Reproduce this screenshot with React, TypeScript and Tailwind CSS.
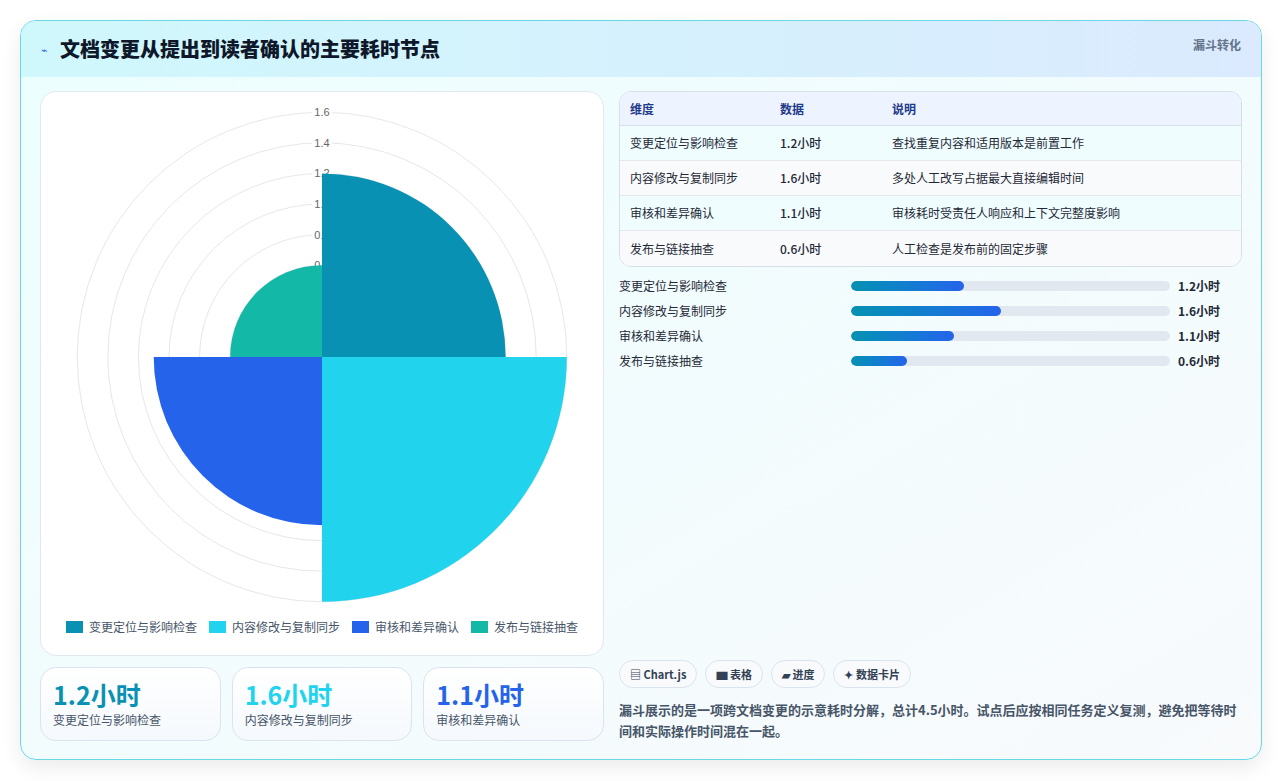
import React from 'react';

const rows = [
  { name: '变更定位与影响检查', v: 1.2, note: '查找重复内容和适用版本是前置工作', color: '#0891b2' },
  { name: '内容修改与复制同步', v: 1.6, note: '多处人工改写占据最大直接编辑时间', color: '#22d3ee' },
  { name: '审核和差异确认', v: 1.1, note: '审核耗时受责任人响应和上下文完整度影响', color: '#2563eb' },
  { name: '发布与链接抽查', v: 0.6, note: '人工检查是发布前的固定步骤', color: '#14b8a6' },
];

const font = { fontFamily: '"Noto Sans CJK SC", "Liberation Sans", sans-serif' };

function PolarChart() {
  const cx = 281;
  const cy = 258;
  const k = 153;
  const wedge = (r: number, a0: number, a1: number) => {
    const p = (a: number) => [cx + r * Math.cos(a), cy + r * Math.sin(a)];
    const [x0, y0] = p(a0);
    const [x1, y1] = p(a1);
    return `M${cx} ${cy} L${x0} ${y0} A${r} ${r} 0 0 1 ${x1} ${y1} Z`;
  };
  const ticks = [0, 0.2, 0.4, 0.6, 0.8, 1.0, 1.2, 1.4, 1.6];
  return (
    <svg width="562" height="522" className="block">
      {ticks.slice(1).map((t) => (
        <circle key={t} cx={cx} cy={cy} r={t * k} fill="none" stroke="#e5e7eb" strokeWidth="1" />
      ))}
      {ticks.map((t) => (
        <g key={'l' + t}>
          <rect x={cx - 10} y={cy - t * k - 7} width="20" height="13" fill="white" />
          <text x={cx} y={cy - t * k + 4} textAnchor="middle" fontSize="11" fill="#666" fontFamily="Liberation Sans, sans-serif">
            {t === 0 ? '0' : t.toFixed(1)}
          </text>
        </g>
      ))}
      {rows.map((r, i) => {
        const a0 = -Math.PI / 2 + (i * Math.PI) / 2;
        return <path key={r.name} d={wedge(r.v * k, a0, a0 + Math.PI / 2)} fill={r.color} />;
      })}
    </svg>
  );
}

export default function App() {
  return (
    <div className="min-h-screen bg-white p-5 text-[#0f172a]" style={font}>
      <div className="h-[740px] rounded-2xl border border-[#67d8e6] overflow-hidden bg-gradient-to-br from-[#ecfeff] to-[#f8fafc] shadow-[0_8px_20px_rgba(0,0,0,0.08)] flex flex-col">
        <div className="h-14 shrink-0 bg-gradient-to-r from-[#cff8fc] to-[#dbeafe] flex items-start justify-between px-5 pt-[14px]">
          <div className="flex items-center gap-3">
            <span className="text-[11px] text-[#2563eb]">⌁</span>
            <h1 className="text-[20px] font-black leading-7">文档变更从提出到读者确认的主要耗时节点</h1>
          </div>
          <span className="text-xs font-bold text-[#64748b] mt-[2px]">漏斗转化</span>
        </div>
        <div className="flex-1 flex gap-[15px] px-[19px] pt-[14px] pb-[18px]">
          <div className="w-[564px] flex flex-col gap-[11px]">
            <div className="h-[565px] rounded-2xl border border-[#e2e8f0] bg-white flex flex-col items-center pt-[7px]">
              <PolarChart />
              <div className="flex items-center gap-3 text-xs text-[#475569] -mt-[2px]">
                {rows.map((r) => (
                  <div key={r.name} className="flex items-center gap-1.5">
                    <span className="w-[17px] h-3" style={{ background: r.color }} />
                    {r.name}
                  </div>
                ))}
              </div>
            </div>
            <div className="flex gap-[11px]">
              {rows.slice(0, 3).map((r) => (
                <div key={r.name} className="flex-1 h-[74px] rounded-2xl border border-[#dbe4ee] bg-gradient-to-b from-white to-[#f5f9fd] px-3 pt-[10px]">
                  <div className="text-[25px] font-bold leading-8" style={{ color: r.color }}>{r.v}小时</div>
                  <div className="text-xs text-[#475569] mt-0.5">{r.name}</div>
                </div>
              ))}
            </div>
          </div>
          <div className="flex-1 flex flex-col">
            <div className="rounded-xl border border-[#d6dee8] overflow-hidden bg-white">
              <div className="grid grid-cols-[150px_112px_1fr] h-[34px] items-center px-2.5 bg-[#eef4ff] border-b border-[#d6dee8] text-xs font-bold text-[#1e3a8a]">
                <span>维度</span><span>数据</span><span>说明</span>
              </div>
              {rows.map((r, i) => (
                <div key={r.name} className={`grid grid-cols-[150px_112px_1fr] h-[35px] items-center px-2.5 text-xs text-[#1f2937] ${i % 2 === 0 ? 'bg-[#effdff]' : 'bg-[#f9fafb]'} ${i < 3 ? 'border-b border-[#e5e7eb]' : ''}`}>
                  <span>{r.name}</span><span className="font-medium">{r.v}小时</span><span>{r.note}</span>
                </div>
              ))}
            </div>
            <div className="flex flex-col gap-[7px] mt-[10px]">
              {rows.map((r) => (
                <div key={r.name} className="flex items-center h-[18px] text-xs">
                  <span className="w-[232px] text-[#1f2937]">{r.name}</span>
                  <div className="w-[319px] h-[10px] rounded-full bg-[#e2e8f0] overflow-hidden">
                    <div className="h-full rounded-full bg-gradient-to-r from-[#0891b2] to-[#2563eb]" style={{ width: `${(r.v / 3.4) * 100}%` }} />
                  </div>
                  <span className="ml-2 font-bold text-[#1f2937]">{r.v}小时</span>
                </div>
              ))}
            </div>
            <div className="flex-1" />
            <div className="flex gap-2 text-[11px] font-bold text-[#334155]">
              {['▤ Chart.js', '▆ 表格', '▰ 进度', '✦ 数据卡片'].map((c) => (
                <span key={c} className="h-[28px] px-2.5 flex items-center rounded-full border border-[#dbe4ee] bg-[#f8fafc]">{c}</span>
              ))}
            </div>
            <p className="mt-[11px] text-[13px] leading-[21px] font-bold text-[#475569]">
              漏斗展示的是一项跨文档变更的示意耗时分解，总计4.5小时。试点后应按相同任务定义复测，避免把等待时间和实际操作时间混在一起。
            </p>
          </div>
        </div>
      </div>
    </div>
  );
}
